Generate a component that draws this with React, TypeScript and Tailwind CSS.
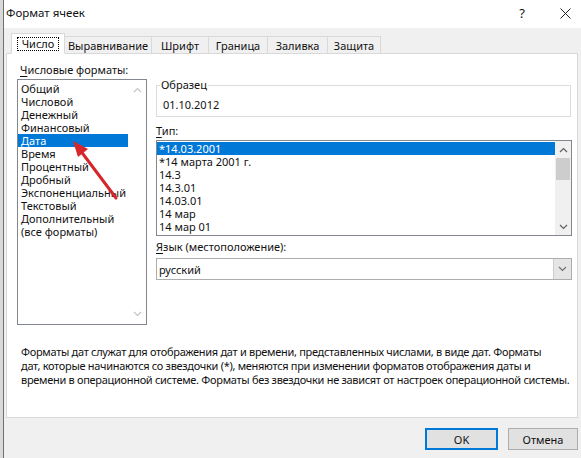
import type { ReactNode } from "react";

const FORMATS = [
  "Общий",
  "Числовой",
  "Денежный",
  "Финансовый",
  "Дата",
  "Время",
  "Процентный",
  "Дробный",
  "Экспоненциальный",
  "Текстовый",
  "Дополнительный",
  "(все форматы)",
];

const TYPES = ["*14.03.2001", "*14 марта 2001 г.", "14.3", "14.3.01", "14.03.01", "14 мар", "14 мар 01"];

const TABS = [
  { label: "Выравнивание", w: "w-[88px]" },
  { label: "Шрифт", w: "w-[58px]" },
  { label: "Граница", w: "w-[60px]" },
  { label: "Заливка", w: "w-[61px]" },
  { label: "Защита", w: "w-[54px]" },
];

const HELP = [
  "Форматы дат служат для отображения дат и времени, представленных числами, в виде дат. Форматы",
  "дат, которые начинаются со звездочки (*), меняются при изменении форматов отображения даты и",
  "времени в операционной системе. Форматы без звездочки не зависят от настроек операционной системы.",
];

function Chevron({ up, color }: { up?: boolean; color: string }) {
  return (
    <svg width={9} height={6} viewBox="0 0 9 6" fill="none" stroke={color} strokeWidth={1.2}>
      {up ? <path d="M1 5 L4.5 1.5 L8 5" /> : <path d="M1 1 L4.5 4.5 L8 1" />}
    </svg>
  );
}

// underlined access key, like the win32 labels
function Key({ ch, rest }: { ch: string; rest: ReactNode }) {
  return (
    <span>
      <span className="underline underline-offset-2">{ch}</span>
      {rest}
    </span>
  );
}

export default function App() {
  return (
    <div
      className="relative flex w-[581px] h-[458px] overflow-hidden bg-[#f0f0f0] text-[11px] text-[#111]"
      style={{ fontFamily: '"Noto Sans", "Open Sans", sans-serif' }}
    >
      {/* sheet peeking out on the left */}
      <div className="w-[4px] shrink-0 bg-[#d9d9d9] border-r border-[#707070]" />

      <div className="flex-1 flex flex-col">
        {/* title bar */}
        <div className="h-[28px] shrink-0 bg-white flex items-center pl-[2px] pb-[2px]">
          <span className="flex-1 text-[11.5px] leading-none">Формат ячеек</span>
          <span className="w-[14px] text-center text-[13px] leading-none mr-[31px]">?</span>
          <svg width={11} height={11} viewBox="0 0 11 11" stroke="#222" strokeWidth={1} className="mr-[10px]">
            <path d="M0.5 0.5 L10.5 10.5 M10.5 0.5 L0.5 10.5" />
          </svg>
        </div>

        {/* tab strip */}
        <div className="flex items-end h-[25px] pl-[7px] shrink-0">
          <div className="relative z-10 -mb-px w-[54px] h-[21px] bg-white border border-[#d9d9d9] border-b-white flex items-center justify-center">
            <span className="border border-dotted border-black px-[4px] leading-[12px]">Число</span>
          </div>
          {TABS.map((t) => (
            <div
              key={t.label}
              className={`${t.w} h-[17px] -ml-px border border-[#d9d9d9] border-b-0 bg-[#f0f0f0] flex items-center justify-center leading-none`}
            >
              {t.label}
            </div>
          ))}
        </div>

        {/* tab panel */}
        <div className="w-[572px] ml-[2px] h-[365px] bg-white border border-[#d9d9d9] flex flex-col">
          <div className="flex pl-[10px]">
            {/* left column */}
            <div className="w-[130px] flex flex-col pt-[8px]">
              <div className="h-[16px] leading-[16px] pl-[3px]">
                <Key ch="Ч" rest="исловые форматы:" />
              </div>
              <div className="mt-[1px] h-[246px] border border-[#828790] flex">
                <div className="flex-1 pt-[2px]">
                  {FORMATS.map((f) => (
                    <div
                      key={f}
                      className={`h-[13px] leading-[13px] pl-[3px] whitespace-nowrap ${
                        f === "Дата" ? "bg-[#0078d7] text-white" : ""
                      }`}
                    >
                      {f}
                    </div>
                  ))}
                </div>
                <div className="w-[18px] flex flex-col items-center justify-between py-[7px]">
                  <Chevron up color="#c4c4c4" />
                  <Chevron color="#c4c4c4" />
                </div>
              </div>
            </div>

            {/* right column */}
            <div className="w-[416px] ml-[9px] flex flex-col pt-[31px]">
              <div className="relative h-[32px] border border-[#dcdcdc] mr-[1px]">
                <span className="absolute -top-[9px] left-[3px] bg-white px-[1px] leading-[16px]">Образец</span>
                <div className="pl-[6px] pt-[11px] leading-[16px]">01.10.2012</div>
              </div>
              <div className="mt-[6px] h-[16px] leading-[16px]">
                <Key ch="Т" rest="ип:" />
              </div>
              <div className="mt-[1px] h-[96px] border border-[#828790] flex">
                <div className="flex-1 pt-[1px]">
                  {TYPES.map((t, i) => (
                    <div
                      key={t}
                      className={`h-[13px] leading-[13px] pl-[2px] ${i === 0 ? "bg-[#0078d7] text-white" : ""}`}
                    >
                      {t}
                    </div>
                  ))}
                </div>
                <div className="w-[16px] bg-[#f0f0f0] flex flex-col items-center">
                  <div className="h-[17px] flex items-center">
                    <Chevron up color="#606060" />
                  </div>
                  <div className="w-[14px] h-[22px] bg-[#cdcdcd]" />
                  <div className="flex-1" />
                  <div className="h-[17px] flex items-center">
                    <Chevron color="#606060" />
                  </div>
                </div>
              </div>
              <div className="mt-[3px] h-[16px] leading-[16px]">
                <Key ch="Я" rest="зык (местоположение):" />
              </div>
              <div className="mt-[3px] h-[22px] border border-[#adadad] flex items-center">
                <span className="flex-1 pl-[2px] leading-none">русский</span>
                <div className="w-[18px] h-[20px] bg-[#e5e5e5] border-l border-[#cccccc] flex items-center justify-center">
                  <Chevron color="#707070" />
                </div>
              </div>
            </div>
          </div>

          <div className="mt-[20px] pl-[14px] leading-[14px] tracking-[-0.3px] whitespace-nowrap">
            {HELP.map((line) => (
              <div key={line}>{line}</div>
            ))}
          </div>
        </div>

        {/* buttons */}
        <div className="flex justify-end gap-[10px] pr-[3px] pt-[10px]">
          <button className="w-[73px] h-[22px] bg-[#e1e1e1] border-2 border-[#0078d7] leading-none">OK</button>
          <button className="w-[70px] h-[22px] bg-[#e1e1e1] border border-[#adadad] leading-none">Отмена</button>
        </div>
      </div>

      {/* red annotation arrow */}
      <svg className="absolute left-0 top-0 pointer-events-none" width={581} height={458}>
        <line x1={116} y1={198} x2={80} y2={150} stroke="#d7262b" strokeWidth={3} strokeLinecap="round" />
        <polygon points="73,141 88,149 78,157" fill="#d7262b" />
      </svg>
    </div>
  );
}
